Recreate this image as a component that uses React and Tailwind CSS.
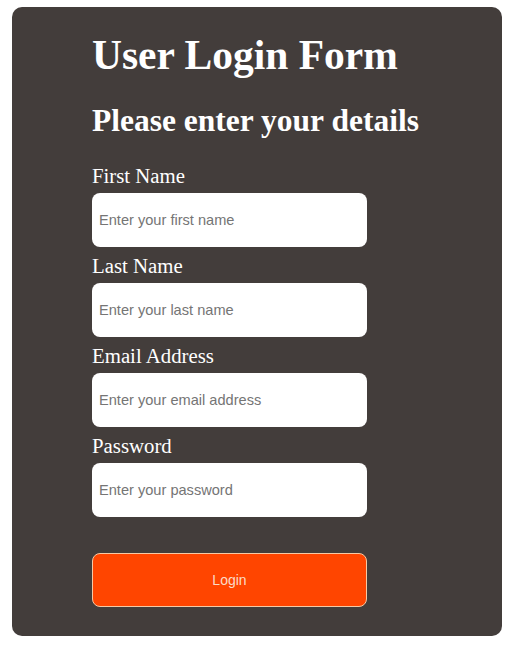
import React from "react";

const fields = [
  { label: "First Name", placeholder: "Enter your first name", type: "text" },
  { label: "Last Name", placeholder: "Enter your last name", type: "text" },
  { label: "Email Address", placeholder: "Enter your email address", type: "email" },
  { label: "Password", placeholder: "Enter your password", type: "password" },
];

export default function App() {
  return (
    <div className="w-[513px] h-[649px] bg-white pt-[7px] pl-[12px]">
      <div className="w-[490px] h-[629px] bg-[#433d3b] rounded-[10px] pt-[26px] pl-[80px] font-['Liberation_Serif','Times_New_Roman',serif] text-white">
        <h1 className="text-[41.5px] leading-[44px] font-bold">User Login Form</h1>
        <h2 className="mt-[27px] text-[31.5px] leading-[33px] font-bold">Please enter your details</h2>
        <form className="flex flex-col" onSubmit={(e) => e.preventDefault()}>
          {fields.map((f, i) => (
            <div key={f.label} className="flex flex-col">
              <label className={`${i === 0 ? "mt-[27px]" : "mt-[7px]"} text-[20.8px] leading-[23px]`}>
                {f.label}
              </label>
              <input
                type={f.type}
                placeholder={f.placeholder}
                className="mt-[6px] w-[275px] h-[54px] rounded-[8px] bg-white pl-[7px] text-[14.6px] text-black placeholder:text-[#757575] font-['Liberation_Sans',Arial,sans-serif] outline-none border-0"
              />
            </div>
          ))}
          <button
            type="submit"
            className="mt-[36px] w-[275px] h-[54px] rounded-[8px] bg-[#ff4500] border border-[#f7c9a4] text-[14px] text-[#fbdcc8] font-['Liberation_Sans',Arial,sans-serif]"
          >
            Login
          </button>
        </form>
      </div>
    </div>
  );
}
